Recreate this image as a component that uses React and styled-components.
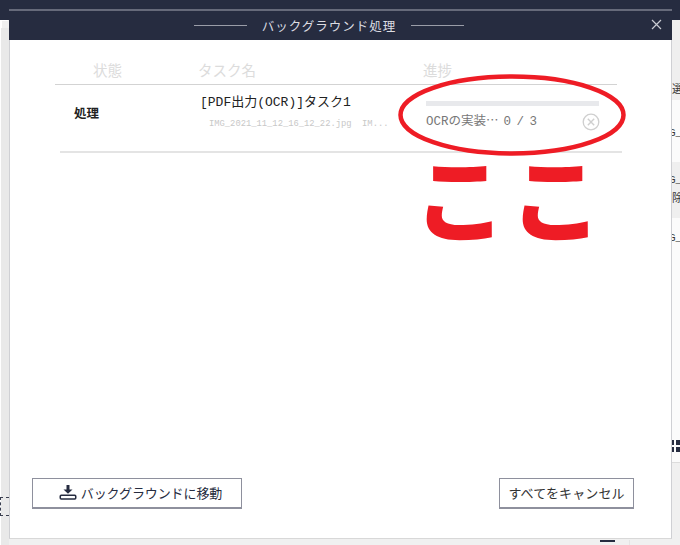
import React from 'react';
import styled, { createGlobalStyle } from 'styled-components';

const MONO = '"Liberation Mono", "Noto Sans CJK JP", monospace';
const SANS = '"Noto Sans CJK JP", "Noto Sans", sans-serif';

const GlobalStyle = createGlobalStyle`
    html, body { margin: 0; padding: 0; background: #f0f0f0; }
    body { width: 680px; height: 545px; overflow: hidden; font-family: ${SANS}; }
`;

const App = () => (
    <Page>
        <GlobalStyle />
        <AppBar />
        <AppMain>
            <LeftRail>
                <CropMark />
            </LeftRail>
            <RightList>
                <ListRow $h={80} $bg="#efefef"><ListText $top={63} $left={0}>選</ListText></ListRow>
                <ListRow $h={62} $bg="#fbfbfb"><ListText $top={26} $left={-3}>G_</ListText></ListRow>
                <ListRow $h={56} $bg="#efefef">
                    <ListText $top={11} $left={-3}>G_</ListText>
                    <ListText $top={30} $left={0}>除</ListText>
                </ListRow>
                <ListRow $h={245} $bg="#fbfbfb">
                    <ListText $top={13} $left={-3}>G_</ListText>
                    <GridIcon />
                </ListRow>
            </RightList>
        </AppMain>
        <BottomMark />
        <BottomDivider />

        <Dialog>
            <DialogHeader>
                <TitleLine />
                <Title>バックグラウンド処理</Title>
                <TitleLine />
                <CloseButton>
                    <svg width="11" height="11" viewBox="0 0 11 11" fill="none" stroke="#c9cbd2" strokeWidth="1.2">
                        <path d="M1 1 L10 10 M10 1 L1 10" />
                    </svg>
                </CloseButton>
            </DialogHeader>
            <DialogBody>
                <TableHead>
                    <StatusHead>状態</StatusHead>
                    <NameHead>タスク名</NameHead>
                    <ProgressHead>進捗</ProgressHead>
                </TableHead>
                <TaskRow>
                    <StatusCell>処理</StatusCell>
                    <NameCell>
                        <TaskName>[PDF出力(OCR)]タスク1</TaskName>
                        <TaskFiles>IMG_2021_11_12_16_12_22.jpg  IM...</TaskFiles>
                    </NameCell>
                    <ProgressCell>
                        <ProgressTrack />
                        <ProgressInfo>
                            <ProgressText>OCRの実装⋯<ProgressCount>0 / 3</ProgressCount></ProgressText>
                            <CancelIcon viewBox="0 0 18 18" fill="none" stroke="#cfcfcf">
                                <circle cx="9" cy="9" r="7.8" strokeWidth="1.3" />
                                <path d="M5.8 5.8 L12.2 12.2 M12.2 5.8 L5.8 12.2" strokeWidth="1.4" />
                            </CancelIcon>
                        </ProgressInfo>
                    </ProgressCell>
                </TaskRow>
                <Footer>
                    <MoveButton>
                        <svg width="18" height="15" viewBox="0 0 18 15" fill="#262c40">
                            <path d="M7.5 0 H10.5 V4.5 H13.5 L9 8.8 L4.5 4.5 H7.5 Z" />
                            <path d="M2.2 9.5 H15.8 A1.7 1.7 0 0 1 17.5 11.2 V13 A1.7 1.7 0 0 1 15.8 14.7 H2.2 A1.7 1.7 0 0 1 0.5 13 V11.2 A1.7 1.7 0 0 1 2.2 9.5 Z M2.4 11 Q2 11 2 11.4 V12.8 Q2 13.2 2.4 13.2 H15.6 Q16 13.2 16 12.8 V11.4 Q16 11 15.6 11 Z" fillRule="evenodd" />
                        </svg>
                        バックグラウンドに移動
                    </MoveButton>
                    <CancelAllButton>すべてをキャンセル</CancelAllButton>
                </Footer>
            </DialogBody>
        </Dialog>

        <Ring width="234" height="88" viewBox="0 0 234 88" fill="none">
            <ellipse cx="117" cy="44" rx="111.5" ry="38.5" stroke="#ee1c25" strokeWidth="4.5" />
        </Ring>
        <Koko>ここ</Koko>
    </Page>
);

const Page = styled.div`
    position: relative;
    width: 680px;
    height: 545px;
    overflow: hidden;
    display: flex;
    flex-direction: column;
`;

const AppBar = styled.div`
    height: 20px;
    flex: none;
    background: #262c40;
`;

const AppMain = styled.div`
    flex: 1;
    display: flex;
    justify-content: space-between;
`;

const LeftRail = styled.div`
    width: 8px;
    margin-left: 1px;
    padding-top: 8px;
    background: #e9e9e9;
    background-clip: content-box;
    box-shadow: -1px 0 0 #fff;
`;

const CropMark = styled.div`
    width: 9px;
    height: 19px;
    margin-top: 469px;
    margin-left: -1px;
    border: 1px dashed #3a3f50;
    border-right: 0;
    box-sizing: border-box;
`;

const RightList = styled.div`
    width: 8px;
    overflow: hidden;
    display: flex;
    flex-direction: column;
`;

const ListRow = styled.div`
    position: relative;
    flex: none;
    height: ${p => p.$h}px;
    box-sizing: border-box;
    background: ${p => p.$bg};
    &:last-child {
        border-bottom: 1px solid #dcdcdc;
    }
`;

const ListText = styled.span`
    position: absolute;
    left: ${p => p.$left}px;
    top: ${p => p.$top}px;
    font: 11px/14px ${MONO};
    color: #333;
    white-space: nowrap;
`;

const GridIcon = styled.div`
    position: absolute;
    left: 0;
    top: 222px;
    width: 8px;
    height: 12px;
    background:
        linear-gradient(#262c40, #262c40) 0 0 / 2px 5px no-repeat,
        linear-gradient(#262c40, #262c40) 0 7px / 2px 5px no-repeat,
        linear-gradient(#262c40, #262c40) 4px 0 / 4px 5px no-repeat,
        linear-gradient(#262c40, #262c40) 4px 7px / 4px 5px no-repeat;
`;

const BottomMark = styled.div`
    position: absolute;
    left: 600px;
    top: 540px;
    width: 15px;
    height: 2px;
    background: #262c40;
`;

const BottomDivider = styled.div`
    position: absolute;
    left: 629px;
    top: 540px;
    width: 1px;
    height: 5px;
    background: #e4e4e4;
`;

const Dialog = styled.div`
    position: absolute;
    left: 9px;
    top: 9px;
    width: 663px;
    height: 530px;
    box-sizing: border-box;
    display: flex;
    flex-direction: column;
    background: #fff;
    border-left: 1px solid #cfd0d4;
    border-right: 1px solid #cfd0d4;
    border-bottom: 1px solid #d8d8d8;
`;

const DialogHeader = styled.div`
    position: relative;
    height: 31px;
    flex: none;
    box-sizing: border-box;
    display: flex;
    align-items: center;
    justify-content: center;
    gap: 15px;
    padding: 0 23px 1px 0;
    background: #262c40;
    border-top: 2px solid #666a7a;
    margin: 0 -1px;
`;

const TitleLine = styled.div`
    width: 53px;
    height: 1px;
    background: #9a9da8;
`;

const Title = styled.div`
    font-size: 12.5px;
    letter-spacing: 1px;
    color: #dcdde2;
    white-space: nowrap;
`;

const CloseButton = styled.div`
    position: absolute;
    right: 10px;
    top: 8px;
    line-height: 0;
`;

const DialogBody = styled.div`
    flex: 1;
    display: flex;
    flex-direction: column;
`;

const TableHead = styled.div`
    height: 45px;
    margin-left: 45px;
    width: 562px;
    box-sizing: border-box;
    border-bottom: 1px solid #d3d3d3;
    display: grid;
    grid-template-columns: 143px 225px 1fr;
    font-size: 14.5px;
    line-height: 20px;
    color: #dcdcdc;
    padding-top: 20px;
`;

const StatusHead = styled.div`
    padding-left: 38px;
`;

const NameHead = styled.div``;

const ProgressHead = styled.div``;

const TaskRow = styled.div`
    height: 68px;
    margin-left: 50px;
    width: 562px;
    box-sizing: border-box;
    border-bottom: 2px solid #e4e4e4;
    display: grid;
    grid-template-columns: 141px 225px 1fr;
`;

const StatusCell = styled.div`
    padding: 19px 0 0 14px;
    font-size: 12.5px;
    line-height: 18px;
    font-weight: 700;
    color: #222;
`;

const NameCell = styled.div`
    display: flex;
    flex-direction: column;
    padding-top: 10px;
`;

const TaskName = styled.div`
    margin-left: -1px;
    font: 13px/16px ${MONO};
    color: #222;
    white-space: nowrap;
`;

const TaskFiles = styled.pre`
    margin: 6px 0 0 8px;
    font: 8.8px/14px ${MONO};
    color: #c8c8c8;
    white-space: pre;
`;

const ProgressCell = styled.div`
    display: flex;
    flex-direction: column;
    padding-top: 16px;
`;

const ProgressTrack = styled.div`
    width: 173px;
    height: 5px;
    background: #e8e9ec;
`;

const ProgressInfo = styled.div`
    width: 173px;
    display: flex;
    justify-content: space-between;
    align-items: flex-start;
    margin-top: 8px;
`;

const ProgressText = styled.span`
    font: 12.5px/16px ${MONO};
    color: #777;
    white-space: pre;
`;

const ProgressCount = styled.span`
    margin-left: 5px;
    letter-spacing: -1px;
`;

const CancelIcon = styled.svg`
    width: 18px;
    height: 18px;
    margin-top: -1px;
    margin-right: -1px;
`;

const Footer = styled.div`
    margin-top: auto;
    padding: 0 37px 29px 22px;
    display: flex;
    justify-content: space-between;
`;

const OutlineButton = styled.button`
    height: 31px;
    box-sizing: border-box;
    padding: 0 0 1px;
    background: #fff;
    border: 1px solid #8e909d;
    border-bottom-width: 2px;
    border-radius: 0;
    font-family: ${SANS};
    font-size: 13px;
    color: #333;
    display: flex;
    align-items: center;
    justify-content: center;
    white-space: nowrap;
`;

const MoveButton = styled(OutlineButton)`
    width: 210px;
    gap: 4px;
    padding-left: 7px;
    letter-spacing: -0.1px;
    color: #262c40;
`;

const CancelAllButton = styled(OutlineButton)`
    width: 135px;
    letter-spacing: 0.1px;
`;

const Ring = styled.svg`
    position: absolute;
    left: 395px;
    top: 71px;
`;

const Koko = styled.div`
    position: absolute;
    left: 414px;
    top: 145px;
    font-size: 92px;
    line-height: 100px;
    font-weight: 900;
    letter-spacing: 4px;
    color: #ee1c25;
    white-space: nowrap;
`;

export default App;
